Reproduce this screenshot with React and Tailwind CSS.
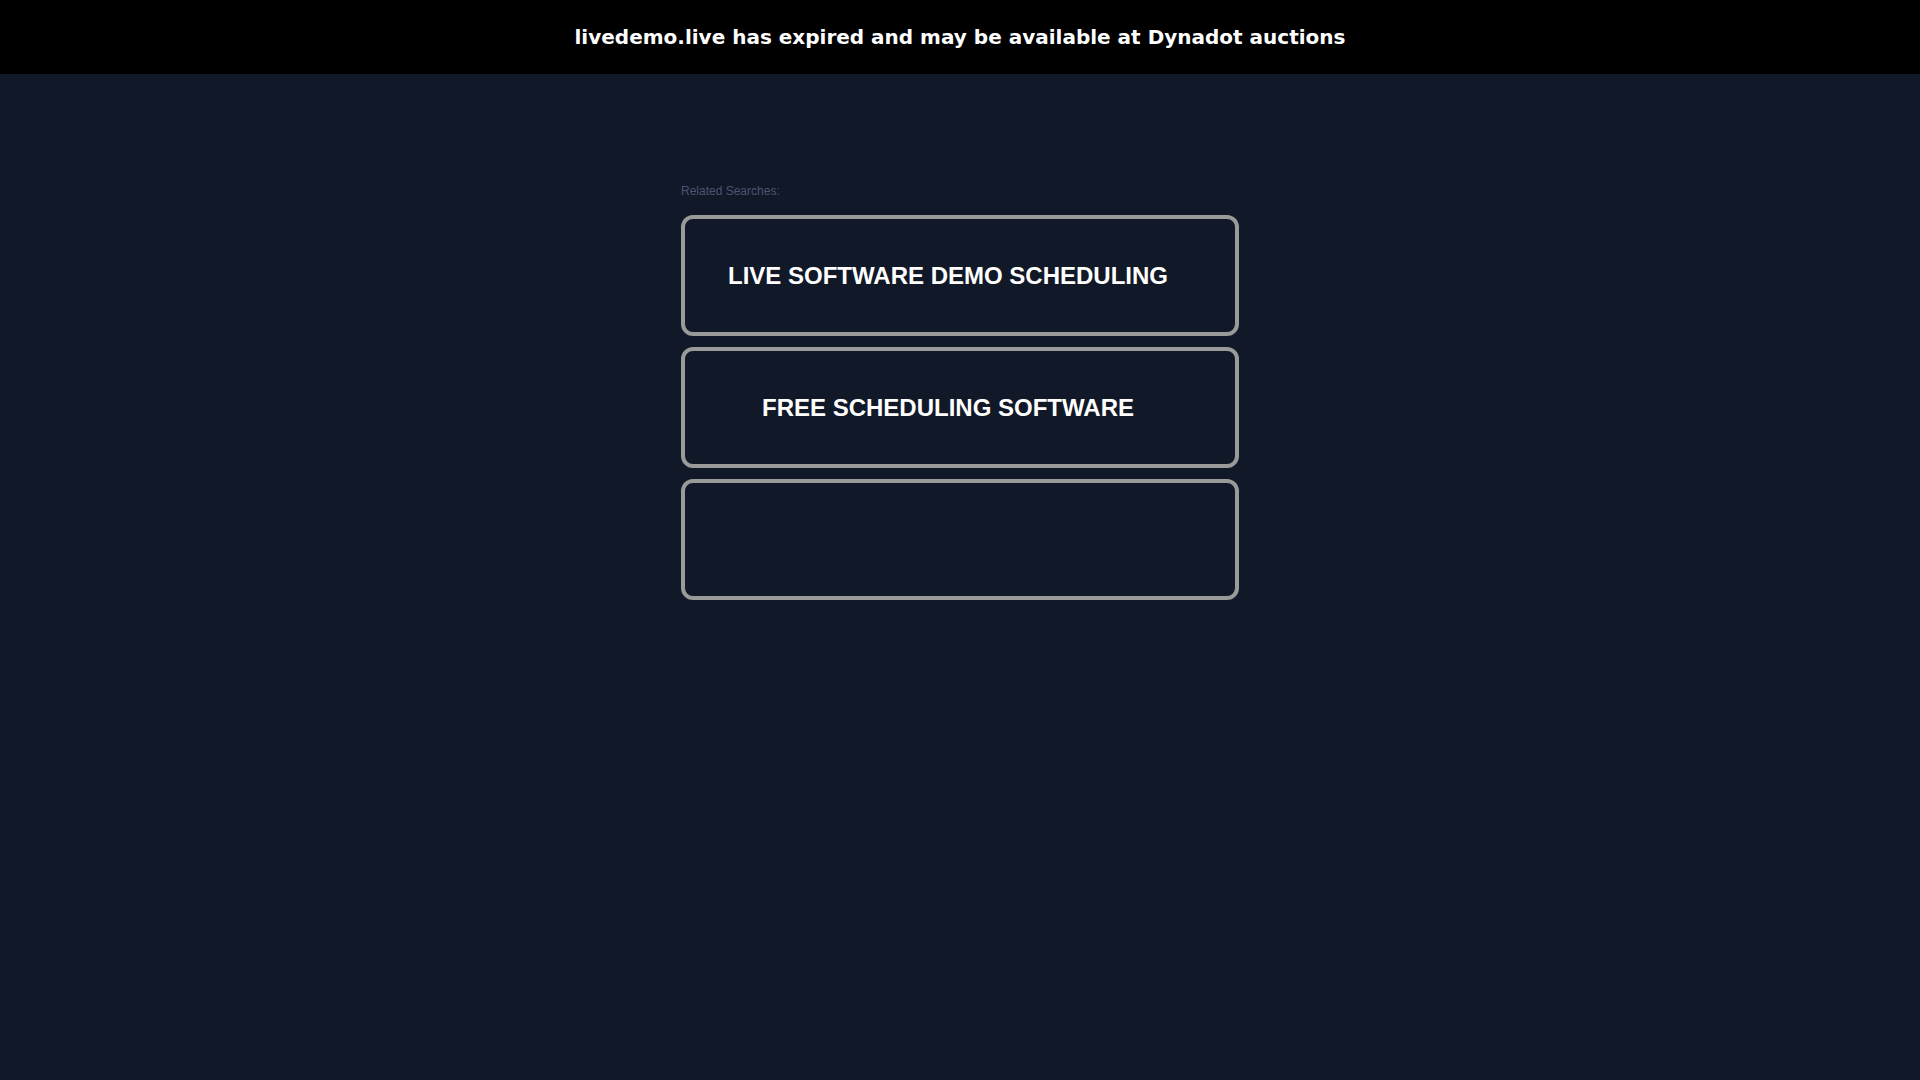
export default function App() {
    const searches = ["LIVE SOFTWARE DEMO SCHEDULING", "FREE SCHEDULING SOFTWARE", ""];

    return (
        <div className="min-h-screen bg-[#111827]">
            <div className="h-[74px] bg-black flex items-center justify-center">
                <p className="text-white font-bold text-[20px] font-['DejaVu_Sans',sans-serif]">
                    livedemo.live has expired and may be available at Dynadot auctions
                </p>
            </div>

            <div className="w-[558px] mx-auto pt-[110px] font-['Liberation_Sans',Arial,sans-serif]">
                <p className="text-[12px] text-[#4b5573] leading-[14px] mb-[17px]">Related Searches:</p>
                <div className="flex flex-col gap-[11px]">
                    {searches.map((s, i) => (
                        <a key={i} href="#"
                           className="h-[121px] border-4 border-[#9a9a9a] rounded-[12px] flex items-center justify-center pr-[24px]">
                            <span className="text-white font-bold text-[24px]">{s}</span>
                        </a>
                    ))}
                </div>
            </div>
        </div>
    )
}
